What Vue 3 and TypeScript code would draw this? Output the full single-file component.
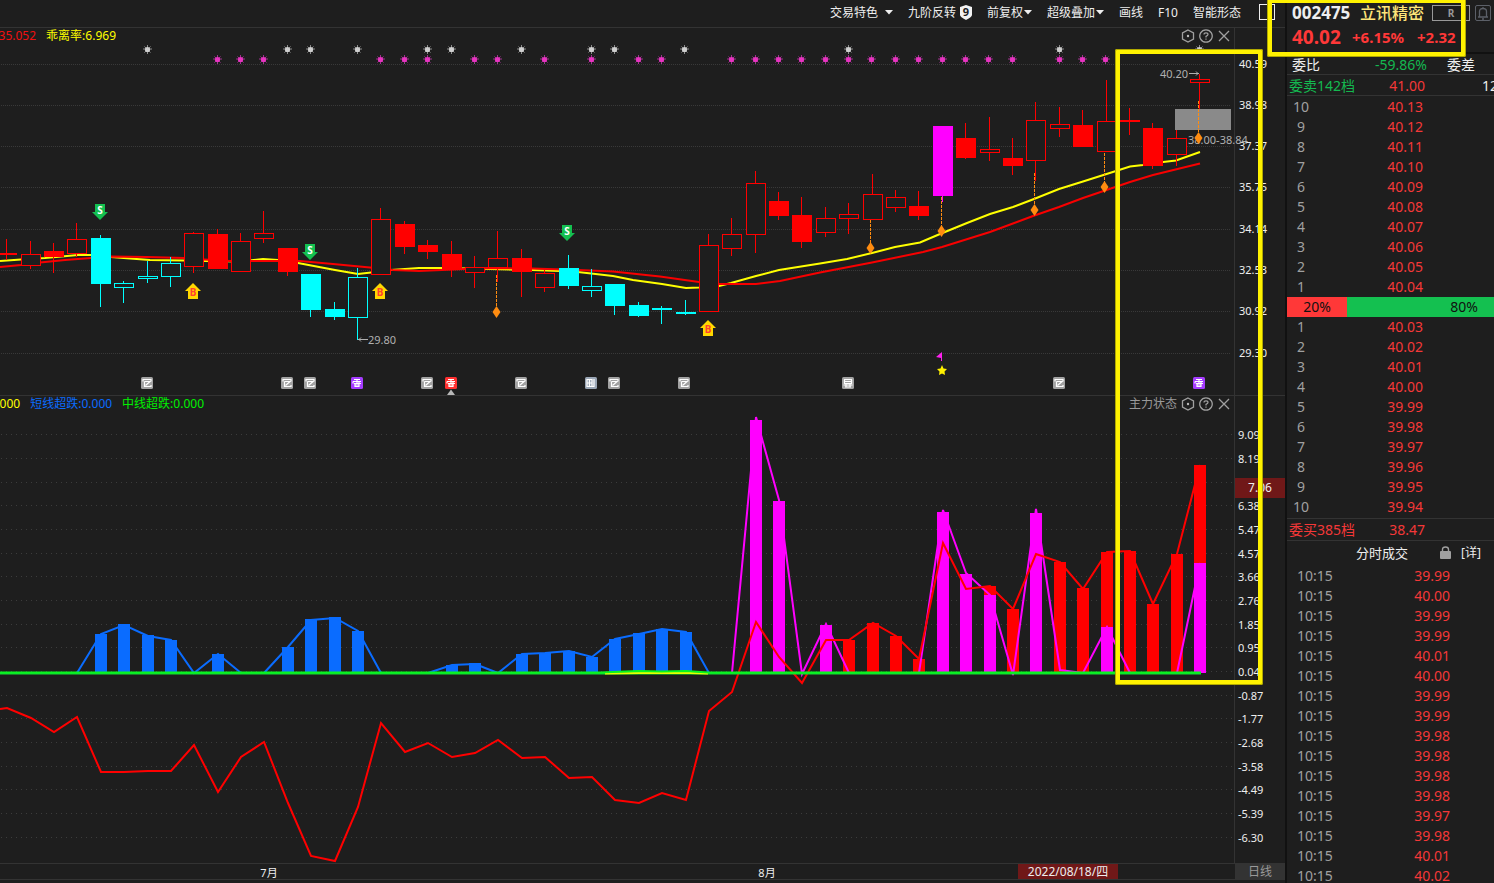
<script setup lang="ts">
type Kind = 'solid' | 'hollow' | 'coolSolid' | 'coolHollow' | 'limit'
interface Candle { x: number; kind: Kind; top: number; bottom: number; high: number; low: number }
interface Bar { x: number; y: number; h: number; color: string }

const PITCH = 23.39
const ZERO = 673
const slot = (i: number): number => Math.floor(6.7 + PITCH * i)

const raw: [Kind, number, number, number, number][] = [
  ['solid', 253, 255, 239, 260], ['hollow', 254, 266, 241, 269], ['solid', 251, 257, 243, 273],
  ['hollow', 239, 254, 223, 257], ['coolSolid', 238, 284, 235, 307], ['coolHollow', 283, 288, 281, 303],
  ['coolHollow', 276, 279, 261, 283], ['coolHollow', 263, 277, 257, 287], ['hollow', 233, 267, 232, 273],
  ['solid', 234, 269, 229, 269], ['hollow', 241, 272, 233, 272], ['hollow', 233, 239, 211, 243],
  ['solid', 248, 272, 248, 276], ['coolSolid', 274, 310, 274, 317], ['coolSolid', 309, 317, 302, 320],
  ['coolHollow', 277, 318, 268, 340], ['hollow', 219, 275, 208, 275], ['solid', 224, 247, 221, 254],
  ['solid', 245, 252, 240, 259], ['solid', 254, 270, 241, 277], ['hollow', 267, 273, 256, 288],
  ['hollow', 258, 268, 231, 282], ['solid', 258, 272, 249, 297], ['hollow', 273, 288, 270, 292],
  ['coolSolid', 268, 286, 255, 289], ['coolHollow', 286, 291, 269, 297], ['coolSolid', 284, 306, 284, 315],
  ['coolSolid', 305, 316, 302, 317], ['coolSolid', 308, 310, 306, 324], ['coolSolid', 312, 314, 300, 315],
  ['hollow', 245, 312, 234, 312], ['hollow', 234, 249, 218, 256], ['hollow', 183, 235, 171, 253],
  ['solid', 201, 216, 192, 220], ['solid', 215, 242, 197, 248], ['hollow', 218, 233, 207, 237],
  ['hollow', 214, 219, 203, 234], ['hollow', 194, 220, 174, 220], ['hollow', 197, 208, 190, 212],
  ['solid', 206, 216, 191, 220], ['limit', 126, 196, 126, 202], ['solid', 138, 158, 123, 159],
  ['hollow', 149, 153, 117, 161], ['solid', 158, 166, 138, 175], ['hollow', 120, 161, 102, 181],
  ['hollow', 124, 129, 107, 137], ['solid', 125, 147, 110, 147], ['hollow', 121, 152, 80, 152],
  ['solid', 120, 122, 108, 135], ['solid', 128, 166, 123, 169], ['hollow', 138, 155, 130, 166],
  ['hollow', 79, 83, 74, 109],
]
const candles: Candle[] = raw.map(([kind, top, bottom, high, low], i) => ({ x: slot(i), kind, top, bottom, high, low }))
const isHollow = (k: Kind): boolean => k === 'hollow' || k === 'coolHollow'
const tint = (k: Kind): string => (k === 'limit' ? '#ff00ff' : k.startsWith('cool') ? '#00ffff' : '#ff0000')

const fastAverage = '0,261 21,259.5 45,258 67,256 78,255 91,255 111,257 130,258.5 150,260 184,260.5 204,261 240,261.5 263,259 278,260 298,263 335,270 358,274 371,272.5 391,270 419,268 442,268 470,268.5 532,270 560,271 578,272 613,276 633,280 662,284 686,288 699,287.5 719,286 731,283 756,276 779,270 820,263.5 847,259 872,253 895,247 920,242.5 940,234 967,223 990,214 1013,207 1034,199 1059,189 1083,181.5 1105,174.5 1130,166.5 1143,165 1163,162 1176,160.5 1200,152'
const slowAverage = '0,267 21,265 40,262.5 65,260 91,258 111,256.5 147,257 184,258 204,259.5 230,261 263,261 300,261 333,264 370,267.5 393,270 419,271 442,270 487,268 532,268.5 578,270 613,271.5 660,276.5 699,282 719,284 756,284 780,281 820,272.5 872,262.5 923,252 942,247 990,232 1033,216 1059,207 1083,198 1130,182 1153,175 1200,163.5'

const priceTicks: [number, string][] = [[64, '40.59'], [105, '38.98'], [146, '37.37'], [187, '35.75'], [229, '34.14'], [270, '32.53'], [311, '30.92'], [353, '29.30']]
const levelTicks: [number, string][] = [
  [434, '9.09'], [458, '8.19'], [482, ''], [505, '6.38'], [529, '5.47'], [553, '4.57'], [576, '3.66'], [600, '2.76'], [624, '1.85'],
  [647, '0.95'], [671, '0.04'], [695, '-0.87'], [718, '-1.77'], [742, '-2.68'], [766, '-3.58'], [789, '-4.49'], [813, '-5.39'], [837, '-6.30'],
]

const greyStars = [147, 287, 310, 357, 427, 451, 521, 591, 614, 684, 848, 1059, 1199]
const pinkStars = [217, 240, 263, 380, 404, 427, 474, 497, 544, 591, 638, 661, 731, 755, 778, 801, 825, 848, 871, 895, 918, 942, 965, 988, 1012, 1059, 1082, 1105]
const sells: [number, number][] = [[100, 204], [310, 244], [567, 225]]
const buys: [number, number][] = [[193, 283], [380, 283], [708, 320]]
const diamonds: [number, number, number][] = [[496, 275, 312], [870, 220, 248], [941, 197, 231], [1034, 173, 210], [1104, 153, 187], [1198, 101, 138]]

const events: { x: number; fill: string; kind: 'note' | 'crest' | 'report' | 'table' }[] = [
  { x: 147, fill: '#a2a2a2', kind: 'note' }, { x: 287, fill: '#a2a2a2', kind: 'note' }, { x: 310, fill: '#a2a2a2', kind: 'note' },
  { x: 357, fill: '#a53cff', kind: 'crest' }, { x: 427, fill: '#a2a2a2', kind: 'note' }, { x: 451, fill: '#ff3030', kind: 'crest' },
  { x: 521, fill: '#a2a2a2', kind: 'note' }, { x: 591, fill: '#9aa6b5', kind: 'report' }, { x: 614, fill: '#a2a2a2', kind: 'note' },
  { x: 684, fill: '#a2a2a2', kind: 'note' }, { x: 848, fill: '#a2a2a2', kind: 'table' }, { x: 1059, fill: '#a2a2a2', kind: 'note' },
  { x: 1199, fill: '#a53cff', kind: 'crest' },
]

const eventPath: Record<string, string> = {
  note: 'M-4 -1.5V-3.5H4V-1.5M-2.5 -1.5H3L-1.5 2.5M-2.5 -1.5V3.5H4V2',
  crest: 'M-3 -3.5H3M-4 -1.5H4M-4 -1.5V.5M-3 .5H4M-2.5 2H2.5M-2.5 3.5H2.5M-2 0V4M2 -1V4M0 -4V0',
  report: 'M-4 -3.5H1V3.5H-4ZM-4 0H1M-1.5 -3V3.5M3 -4V3.5H1',
  table: 'M-3.5 -3.5H3.5V.5H-3.5ZM-3.5 -1.5H3.5M-4.5 2H4.5M-3 4H3M-2 1V4M2 1V4',
}

const makeBars = (color: string, items: [number, number][]): Bar[] =>
  items.map(([i, y]) => ({ x: slot(i) - 5, y, h: ZERO - y, color }))
const bars: Bar[] = [
  ...makeBars('#0a6cff', [[4, 634], [5, 624], [6, 635], [7, 640], [9, 654], [12, 647], [13, 619], [14, 617], [15, 631], [19, 665], [20, 663], [22, 654], [23, 653], [24, 651], [25, 657], [26, 639], [27, 633], [28, 629], [29, 632]]),
  ...makeBars('#ff0000', [[36, 640], [37, 623], [38, 636], [39, 659], [42, 586], [43, 609], [45, 562], [46, 588], [47, 552], [48, 551], [49, 604], [50, 554], [51, 465]]),
  ...makeBars('#ff00ff', [[32, 420], [33, 501], [35, 625], [40, 512], [41, 574], [42, 595], [44, 513], [47, 627], [51, 563]]),
]
const trace = (items: [number, number][]): string => items.map(([i, y]) => `${slot(i) + 1},${y}`).join(' ')
const blueLines = [
  trace([[3, 673], [4, 634], [5, 625], [6, 636], [7, 640], [8, 673], [9, 654], [10, 673]]),
  trace([[11, 673], [12, 647], [13, 620], [14, 618], [15, 631], [16, 673]]),
  trace([[18, 673], [19, 665], [20, 664], [21, 673], [22, 654], [23, 653], [24, 651], [25, 657], [26, 639], [27, 634], [28, 629], [29, 632], [30, 673]]),
]
const pinkLine = trace([[31, 673], [32, 417], [33, 500], [34, 674], [35, 624], [36, 673], [39, 673], [40, 510], [41, 573], [42, 595], [43, 675], [44, 509], [45, 670], [46, 673], [47, 627], [48, 673], [50, 673], [51, 563]])
const redLevels = [708, 718, 732, 717, 772, 772, 771, 771, 745, 792, 757, 742, 803, 856, 861, 807, 723, 752, 743, 757, 753, 740, 758, 757, 778, 777, 800, 803, 793, 800, 711, 692, 622, 657, 683, 640, 640, 623, 636, 659, 543, 589, 586, 609, 554, 562, 589, 552, 551, 604, 554, 465]
const redLine = '0,709 ' + trace(redLevels.map((y, i): [number, number] => [i, y]))

const tools = [
  { label: '交易特色', extra: 'wide' }, { label: '九阶反转', extra: 'nine' }, { label: '前复权', extra: 'caret' }, { label: '超级叠加', extra: 'caret' },
  { label: '画线', extra: '' }, { label: 'F10', extra: '' }, { label: '智能形态', extra: '' },
]
const asks: [number, string][] = [[10, '40.13'], [9, '40.12'], [8, '40.11'], [7, '40.10'], [6, '40.09'], [5, '40.08'], [4, '40.07'], [3, '40.06'], [2, '40.05'], [1, '40.04']]
const bids: [number, string][] = [[1, '40.03'], [2, '40.02'], [3, '40.01'], [4, '40.00'], [5, '39.99'], [6, '39.98'], [7, '39.97'], [8, '39.96'], [9, '39.95'], [10, '39.94']]
const trades = ['39.99', '40.00', '39.99', '39.99', '40.01', '40.00', '39.99', '39.99', '39.98', '39.98', '39.98', '39.98', '39.97', '39.98', '40.01', '40.02']
const actions = ['设置', '帮助', '关闭']
const actionPath = ['M7 1L12.5 4V10L7 13L1.5 10V4Z', 'M7 .8A6.2 6.2 0 1 1 6.99 .8Z', 'M2 2L12 12M12 2L2 12']
</script>

<template>
  <div class="terminal">
    <main class="market">
      <nav class="toolbar">
        <button v-for="t in tools" :key="t.label" type="button" :class="['tool', t.extra]">
          <span>{{ t.label }}</span>
          <svg v-if="t.extra === 'wide' || t.extra === 'caret'" width="8" height="5" viewBox="0 0 8 5"><path d="M0 0H8L4 4.5Z" fill="#eee" /></svg>
          <svg v-if="t.extra === 'nine'" width="12" height="15" viewBox="0 0 12 15">
            <path d="M0 2L6 0L12 2V10Q12 12 6 15Q0 12 0 10Z" fill="#f2f2f2" />
            <text x="6" y="11" text-anchor="middle" font-size="11" font-weight="700" fill="#1e1e1e">9</text>
          </svg>
        </button>
        <button type="button" class="frame-toggle" aria-label="窗口"></button>
      </nav>

      <section class="panel">
        <header class="panel-head">
          <div class="readout price-readout"><span class="red">35.052</span><span class="yellow">乖离率:6.969</span></div>
          <div class="panel-actions">
            <button v-for="(a, i) in actions" :key="a" type="button" :aria-label="a">
              <svg width="14" height="14" viewBox="0 0 14 14">
                <path :d="actionPath[i]" fill="none" stroke="#a0a0a0" stroke-width="1.3" />
                <circle v-if="i === 0" cx="7" cy="7" r="1.2" fill="#bbb" />
                <path v-if="i === 1" d="M5 5.6Q5 3.8 7 3.8T9 5.6Q9 6.6 7 7.4V8.6M7 9.6V10.8" fill="none" stroke="#a0a0a0" stroke-width="1.2" />
              </svg>
            </button>
          </div>
        </header>
        <svg class="chart" viewBox="0 44 1285 351">
          <g stroke="#393939" stroke-dasharray="1 1">
            <line v-for="[y] in priceTicks" :key="y" x1="1" :y1="y + 0.5" x2="1231" :y2="y + 0.5" />
          </g>
          <line x1="1234.5" y1="44" x2="1234.5" y2="395" stroke="#333" />
          <g class="axis"><text v-for="[y, l] in priceTicks" :key="y" x="1239" :y="y + 4">{{ l }}</text></g>

          <g v-for="x in greyStars" :key="'g' + x" :transform="`translate(${x} 49)`">
            <path d="M-4 0H5M.5 -4V5M-2.5 -2.5L3.5 3.5M3.5 -2.5L-2.5 3.5" stroke="#8c8c8c" /><circle cx=".5" cy=".5" r="2.6" fill="#cfcfcf" />
          </g>
          <g v-for="x in pinkStars" :key="'p' + x" :transform="`translate(${x} 59)`">
            <path d="M-4 0H5M.5 -4V5M-2.5 -2.5L3.5 3.5M3.5 -2.5L-2.5 3.5" stroke="#a03090" /><circle cx=".5" cy=".5" r="2.6" fill="#e834c0" />
          </g>

          <polyline :points="fastAverage" fill="none" stroke="#ffff00" stroke-width="2" />
          <polyline :points="slowAverage" fill="none" stroke="#f80000" stroke-width="2" />

          <g v-for="c in candles" :key="c.x">
            <line :x1="c.x + 0.5" :x2="c.x + 0.5" :y1="c.high" :y2="c.low" :stroke="tint(c.kind)" />
            <rect v-if="isHollow(c.kind)" :x="c.x - 8.5" :y="c.top + 0.5" width="19" :height="c.bottom - c.top - 1" fill="#1e1e1e" :stroke="tint(c.kind)" />
            <rect v-else :x="c.x - 9" :y="c.top" width="20" :height="c.bottom - c.top" :fill="tint(c.kind)" />
          </g>

          <rect x="1175" y="109" width="56" height="21" fill="#8a8a8a" />
          <text class="note" x="1188" y="144">38.00-38.84</text>
          <g v-for="[x, from, y] in diamonds" :key="'d' + x">
            <line :x1="x + 0.5" :x2="x + 0.5" :y1="from" :y2="y - 5" stroke="#ff8c10" stroke-dasharray="3 1" />
            <path :d="`M${x + 0.5} ${y - 6}L${x + 4.5} ${y}L${x + 0.5} ${y + 6}L${x - 3.5} ${y}Z`" fill="#ff8c10" />
          </g>

          <g v-for="[x, y] in sells" :key="'s' + x" :transform="`translate(${x} ${y})`">
            <path d="M-5 0H5V8H8L0 16L-8 8H-5Z" fill="#14c050" /><text class="mark" y="10" fill="#fff">S</text>
          </g>
          <g v-for="[x, y] in buys" :key="'b' + x" :transform="`translate(${x} ${y})`">
            <path d="M0 0L8 8H5V16H-5V8H-8Z" fill="#ffd800" /><text class="mark" y="13" fill="#ff4030">B</text>
          </g>

          <path d="M358 339.5H368M361 337.5L359 339.5L361 341.5" fill="none" stroke="#b0b0b0" />
          <text class="note" x="368" y="344">29.80</text>
          <path d="M1189 73.5H1199M1196 71.5L1198 73.5L1196 75.5" fill="none" stroke="#b0b0b0" />
          <text class="note" x="1160" y="78">40.20</text>
          <path d="M936 357L942 352V361H941V358Z" fill="#ff20f0" />
          <path d="M942 365L943.5 368.5L947 369L944.5 371.5L945 375L942 373.5L939 375L939.5 371.5L937 369L940.5 368.5Z" fill="#fff000" />

          <g v-for="e in events" :key="'e' + e.x" :transform="`translate(${e.x} 383)`">
            <rect x="-6" y="-6" width="12" height="12" rx="1.5" :fill="e.fill" />
            <path :d="eventPath[e.kind]" fill="none" stroke="#fff" stroke-width="1.2" />
          </g>
          <path d="M447 395L451 389.5L455 395Z" fill="#b8b8b8" />
        </svg>
      </section>

      <section class="panel">
        <header class="panel-head">
          <div class="readout level-readout"><span class="yellow">0.000</span><span class="blue">短线超跌:0.000</span><span class="green">中线超跌:0.000</span></div>
          <div class="panel-actions">
            <span class="panel-name">主力状态</span>
            <button v-for="(a, i) in actions" :key="a" type="button" :aria-label="a">
              <svg width="14" height="14" viewBox="0 0 14 14">
                <path :d="actionPath[i]" fill="none" stroke="#a0a0a0" stroke-width="1.3" />
                <circle v-if="i === 0" cx="7" cy="7" r="1.2" fill="#bbb" />
                <path v-if="i === 1" d="M5 5.6Q5 3.8 7 3.8T9 5.6Q9 6.6 7 7.4V8.6M7 9.6V10.8" fill="none" stroke="#a0a0a0" stroke-width="1.2" />
              </svg>
            </button>
          </div>
        </header>
        <svg class="chart" viewBox="0 412 1285 451">
          <g stroke="#3c3c3c" stroke-dasharray="1 4">
            <line v-for="[y] in levelTicks" :key="y" x1="1" :y1="y + 0.5" x2="1234" :y2="y + 0.5" />
          </g>
          <line x1="1234.5" y1="412" x2="1234.5" y2="863" stroke="#333" />
          <g class="axis"><text v-for="[y, l] in levelTicks" :key="y" x="1238" :y="y + 5">{{ l }}</text></g>
          <rect x="1235" y="478" width="50" height="20" fill="#701818" />
          <text class="cursor-value" x="1260" y="492">7.06</text>

          <rect v-for="(b, i) in bars" :key="i" :x="b.x" :y="b.y" width="12" :height="b.h" :fill="b.color" />
          <g fill="none" stroke-width="2">
            <polyline v-for="l in blueLines" :key="l" :points="l" stroke="#0a6cff" />
            <polyline :points="pinkLine" stroke="#ff00ff" />
            <polyline :points="redLine" stroke="#ff0000" />
            <path d="M0 673.5H1201" stroke="#10dd30" />
            <path d="M605 673.5L640 673H690L708 673.5" stroke="#e8ff00" />
            <path d="M0 672.5H600L638 671L662 671.5L686 671L708 672.5H1201" stroke="#08f520" />
          </g>
        </svg>
      </section>

      <footer class="time-axis">
        <svg class="dates" viewBox="0 0 1235 15">
          <text class="month" x="269" y="13">7月</text>
          <text class="month" x="767" y="13">8月</text>
          <rect x="1018" y="0" width="100" height="15" fill="#701818" />
          <text class="cursor-value" x="1068" y="12">2022/08/18/四</text>
        </svg>
        <button type="button" class="period">日线</button>
      </footer>
      <div class="highlight range-highlight"></div>
    </main>

    <aside class="quote">
      <header class="stock">
        <div class="identity">
          <strong class="code">002475</strong><strong class="name">立讯精密</strong>
          <span class="badge">R</span>
          <button type="button" class="bell" aria-label="提醒">
            <svg width="12" height="14" viewBox="0 0 12 14"><path d="M1 11H11M2.5 11V5.5Q2.5 2.5 6 2.5T9.5 5.5V11M6 1V2.5M5 13H7" fill="none" stroke="#5c6068" stroke-width="1.3" /></svg>
          </button>
        </div>
        <div class="last"><b class="price">40.02</b><b class="pct">+6.15%</b><b class="diff">+2.32</b></div>
        <div class="highlight stock-highlight"></div>
      </header>

      <div class="row ratio"><span>委比</span><span class="down value">-59.86%</span><span class="next">委差</span></div>
      <div class="row total"><span class="down">委卖142档</span><span class="up value">41.00</span><span class="volume">12</span></div>
      <table class="book asks">
        <tbody><tr v-for="[n, p] in asks" :key="n"><th scope="row">{{ n }}</th><td>{{ p }}</td><td></td></tr></tbody>
      </table>
      <div class="balance"><span class="buy-share">20%</span><span class="sell-share">80%</span></div>
      <table class="book bids">
        <tbody><tr v-for="[n, p] in bids" :key="n"><th scope="row">{{ n }}</th><td>{{ p }}</td><td></td></tr></tbody>
      </table>
      <div class="row total bid-total"><span class="up">委买385档</span><span class="up value">38.47</span></div>
      <div class="trade-head">
        <h2>分时成交</h2>
        <svg width="11" height="13" viewBox="0 0 11 13"><rect y="5" width="11" height="8" rx="1" fill="#a0a0a0" /><path d="M2.5 6V3.5Q2.5 1 5.5 1T8.5 3.5V6" fill="none" stroke="#a0a0a0" stroke-width="1.4" /></svg>
        <a href="#detail">[详]</a>
      </div>
      <table class="trades">
        <tbody><tr v-for="(p, i) in trades" :key="i"><th scope="row">10:15</th><td>{{ p }}</td><td></td></tr></tbody>
      </table>
    </aside>
  </div>
</template>

<style>
body { background: #1e1e1e; }
</style>

<style scoped>
.terminal { display: flex; height: 100vh; overflow: hidden; background: #1e1e1e; color: #eee; font: 12px/16px "Noto Sans", "Noto Sans CJK SC", sans-serif; }
button { margin: 0; padding: 0; border: 0; background: none; color: inherit; font: inherit; }
svg { display: block; }
.market { position: relative; flex: 1; min-width: 0; }
.toolbar { display: flex; align-items: center; justify-content: flex-end; gap: 15px; height: 27px; padding-right: 10px; border-bottom: 1px solid #333; }
.tool { display: flex; align-items: center; height: 24px; margin-bottom: 2px; gap: 1px; white-space: nowrap; }
.tool.wide { gap: 7px; }
.tool.nine { gap: 4px; }
.frame-toggle { width: 16px; height: 16px; margin: 0 0 3px 3px; border: 1px solid #eee; }
.panel { border-bottom: 1px solid #333; }
.panel-head { box-sizing: border-box; display: flex; justify-content: space-between; align-items: center; width: calc(100% - 50px); height: 16px; padding-right: 3px; border-right: 1px solid #333; }
.readout { display: flex; justify-content: flex-end; gap: 10px; overflow: hidden; white-space: nowrap; }
.price-readout { width: 116px; }
.level-readout { width: 204px; }
.red { color: #f01010; }
.yellow { color: #ffff00; }
.blue { color: #0a6cff; }
.green { color: #00f000; }
.panel-actions { display: flex; align-items: center; gap: 4px; }
.panel-name { color: #999; }
.chart { width: 100%; height: auto; }
.axis { fill: #eee; font-size: 11px; }
.note { fill: #b0b0b0; font-size: 11px; }
.mark { font-size: 10px; font-weight: 700; text-anchor: middle; }
.cursor-value { fill: #eee; font-size: 12px; text-anchor: middle; }
.month { fill: #eee; font-size: 11px; text-anchor: middle; }
.time-axis { display: flex; border-bottom: 1px solid #333; }
.dates { flex: 1; min-width: 0; height: auto; }
.period { width: 50px; background: #333; color: #999; line-height: 15px; }
.highlight { position: absolute; box-sizing: border-box; border: 5px solid #fff200; border-radius: 2px; outline: 1px solid #b0a800; outline-offset: -1px; pointer-events: none; }
.range-highlight { top: 49px; right: 22px; width: 148px; height: 636px; }

.quote { position: relative; flex: none; width: 207px; border-left: 2px solid #111; font-size: 14px; line-height: 20px; }
.stock { position: relative; height: 52px; border-bottom: 2px solid #111; }
.identity { display: flex; align-items: center; height: 26px; padding-left: 5px; }
.code { width: 68px; font-size: 17px; }
.name { width: 72px; color: #ffe57a; font-size: 16px; font-weight: 500; white-space: nowrap; }
.badge { box-sizing: border-box; width: 38px; height: 16px; border: 1px solid #999; color: #999; font-size: 10px; font-weight: 700; line-height: 14px; text-align: center; }
.bell { box-sizing: border-box; display: grid; place-items: center; width: 16px; height: 16px; margin-left: 5px; border: 1px solid #5c6068; border-radius: 2px; }
.last { display: flex; align-items: center; height: 22px; padding-left: 5px; color: #ff3838; font-size: 15px; white-space: nowrap; }
.price { width: 60px; font-size: 19px; }
.pct { width: 65px; }
.stock-highlight { top: -2px; left: -20px; width: 199px; height: 59px; z-index: 1; }
.row { display: grid; grid-template-columns: 70px 66px 1fr; height: 20px; padding-left: 2px; border-bottom: 1px solid #333; overflow: hidden; line-height: 22px; white-space: nowrap; }
.ratio { grid-template-columns: 67px 68px 1fr; padding-left: 5px; }
.value { text-align: right; }
.next { padding-left: 20px; }
.volume { padding-left: 57px; }
.up { color: #f43838; }
.down { color: #14b850; }
.book, .trades { width: 100%; table-layout: fixed; border-collapse: collapse; }
.asks { margin-top: 1px; }
.bids { margin-bottom: 1px; }
th, td { height: 20px; padding: 0; line-height: 20px; }
th { color: #a0a0a0; font-weight: 400; }
td { color: #f43838; text-align: right; }
.book th { width: 28px; text-align: center; }
.book td { width: 108px; }
.book td:last-child, .trades td:last-child { width: auto; }
.balance { display: flex; height: 20px; color: #111; text-align: center; }
.buy-share { width: 29%; background: #ff3838; }
.sell-share { box-sizing: border-box; width: 71%; padding-right: 16px; background: #14c050; text-align: right; }
.bid-total { border-top: 1px solid #333; height: 21px; line-height: 21px; }
.trade-head { display: flex; align-items: center; height: 23px; padding: 0 0 2px 69px; }
h2 { flex: none; width: 84px; margin: 0; font-size: 13px; font-weight: 400; line-height: 20px; }
.trade-head a { margin-left: 10px; color: #eee; font-size: 12px; text-decoration: none; }
.trades th { width: 45px; padding-left: 10px; text-align: left; box-sizing: border-box; }
.trades td { width: 118px; }
</style>
